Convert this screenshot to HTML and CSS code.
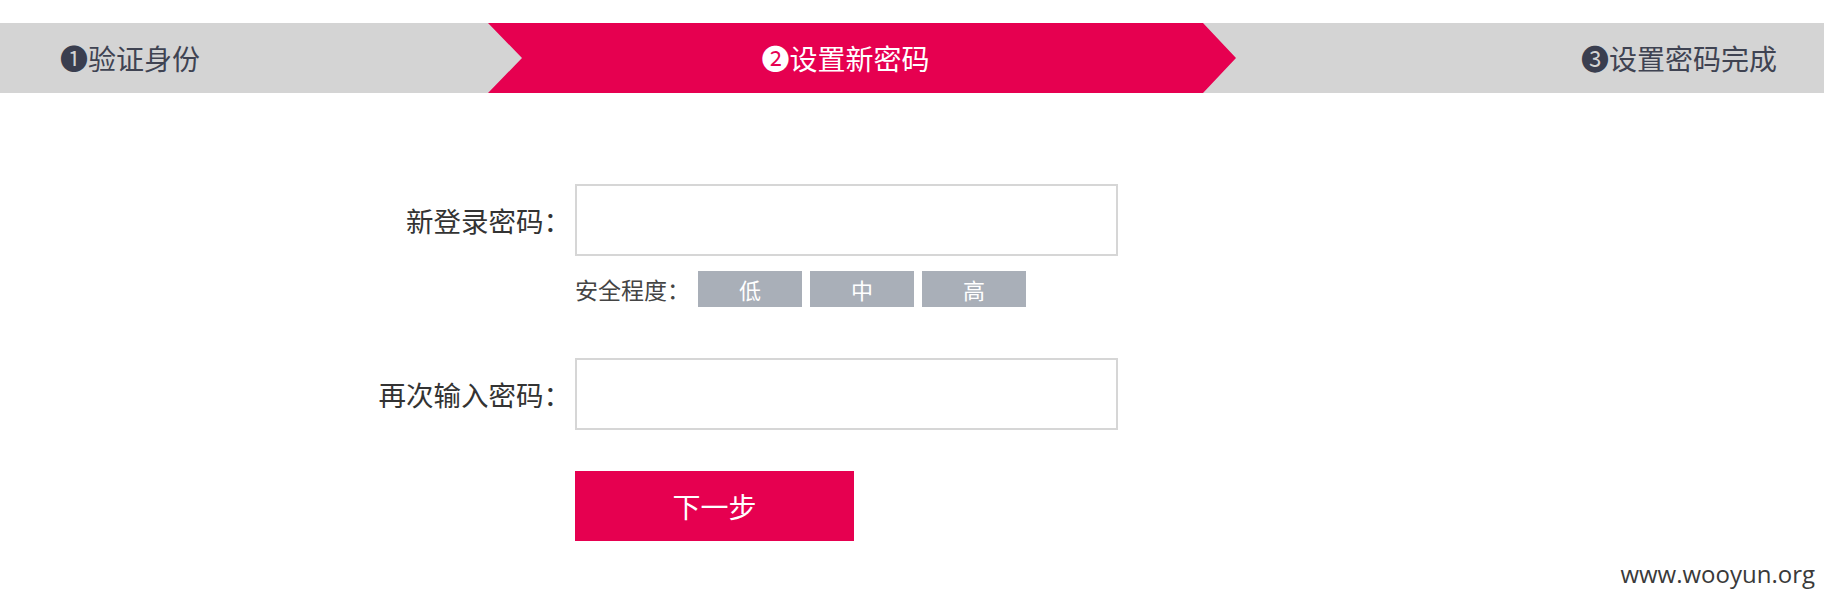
FILE: index.html
```html
<!DOCTYPE html>
<html lang="zh-CN">
<head>
<meta charset="utf-8">
<title>设置新密码</title>
<link rel="stylesheet" href="styles.css">
</head>
<body>
<div class="steps">
  <div class="step step-done"><span class="num">❶</span>验证身份</div>
  <div class="step step-active"><span class="num">❷</span>设置新密码</div>
  <div class="step step-next"><span class="num">❸</span>设置密码完成</div>
</div>

<form class="form">
  <div class="row">
    <label class="label">新登录密码：</label>
    <input class="input" type="password">
  </div>
  <div class="strength">
    <span class="strength-label">安全程度：</span>
    <span class="level">低</span>
    <span class="level">中</span>
    <span class="level">高</span>
  </div>
  <div class="row row-second">
    <label class="label">再次输入密码：</label>
    <input class="input" type="password">
  </div>
  <div class="actions">
    <button class="btn" type="button">下一步</button>
  </div>
</form>

<div class="watermark">www.wooyun.org</div>
</body>
</html>
```

FILE: styles.css
```css
html, body {
  margin: 0;
  padding: 0;
  background: #ffffff;
}

body {
  padding-top: 23px;
  font-family: "Noto Sans CJK SC", "Liberation Sans", sans-serif;
  color: #333333;
  height: 602px;
  box-sizing: border-box;
  position: relative;
  overflow: hidden;
}

.steps {
  display: flex;
  height: 70px;
  background: #d4d4d4;
  font-size: 28px;
  line-height: 70px;
  color: #3f4352;
}

.step {
  box-sizing: border-box;
  white-space: nowrap;
}

.num {
  color: #3a3e4f;
}

.step-done {
  width: 488px;
  padding-left: 60px;
}

.step-active {
  width: 748px;
  padding-right: 33px;
  text-align: center;
  background: #e60050;
  color: #ffffff;
  clip-path: polygon(0 0, 715px 0, 748px 35px, 715px 70px, 0 70px, 34px 35px);
}

.step-active .num {
  color: #ffffff;
}

.step-next {
  flex: 1;
  text-align: right;
  padding-right: 47px;
}

.form {
  margin: 91px 0 0 357px;
  display: flex;
  flex-direction: column;
}

.row {
  display: flex;
  align-items: center;
  gap: 4px;
}

.label {
  width: 214px;
  text-align: right;
  font-size: 27.5px;
  color: #333333;
  white-space: nowrap;
}

.input {
  box-sizing: border-box;
  width: 543px;
  height: 72px;
  border: 2px solid #d6d6d6;
  margin: 0;
  padding: 0 12px;
  outline: none;
  font-size: 20px;
}

.strength {
  display: flex;
  align-items: center;
  margin: 15px 0 0 218px;
  height: 36px;
}

.strength-label {
  font-size: 23px;
  color: #444444;
  width: 123px;
  white-space: nowrap;
}

.level {
  width: 104px;
  height: 36px;
  line-height: 36px;
  margin-right: 8px;
  background: #a9afb8;
  color: #ffffff;
  text-align: center;
  font-size: 22px;
}

.row-second {
  margin-top: 51px;
}

.actions {
  margin: 41px 0 0 218px;
}

.btn {
  width: 279px;
  height: 70px;
  border: 0;
  padding: 0;
  background: #e60050;
  color: #ffffff;
  font-family: "Noto Sans CJK SC", sans-serif;
  font-size: 28px;
  cursor: pointer;
}

.watermark {
  position: absolute;
  right: 9px;
  bottom: 12px;
  font-family: "Open Sans", "Liberation Sans", sans-serif;
  font-size: 24px;
  color: #3a3a3a;
}
```
